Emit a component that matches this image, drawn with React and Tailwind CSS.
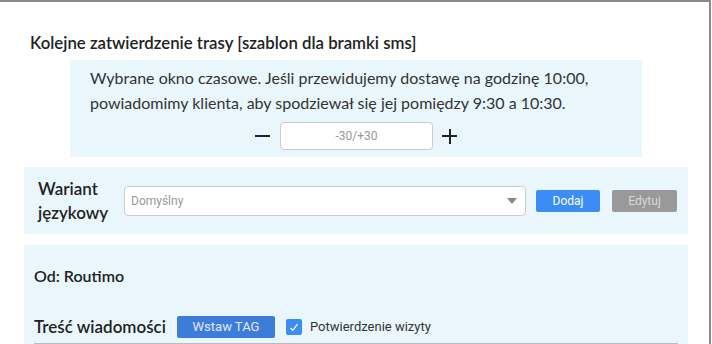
function Caret() {
  return (
    <svg width="10" height="6" viewBox="0 0 10 6" className="text-[#888]">
      <path d="M0 0h10L5 6z" fill="currentColor" />
    </svg>
  );
}

export default function App() {
  return (
    <div className="w-[712px] h-[344px] overflow-hidden bg-white font-['Lato',sans-serif] text-[#222]">
      <div className="h-full w-[711px] border-t-2 border-r-2 border-[#8a8a8a] pt-[30px]">
        <h2 className="pl-[30px] text-[16.8px] font-semibold leading-[22px]">
          Kolejne zatwierdzenie trasy [szablon dla bramki sms]
        </h2>

        <div className="mx-[70px] mt-[6px] w-[572px] bg-[#e9f7fd] px-5 pt-[5px] pb-[7px]">
          <p className="text-[16px] leading-[25px] text-[#333]">
            Wybrane okno czasowe. Jeśli przewidujemy dostawę na godzinę 10:00,
            powiadomimy klienta, aby spodziewał się jej pomiędzy 9:30 a 10:30.
          </p>
          <div className="mt-[7px] flex items-center justify-center gap-[9px]">
            <span className="block w-[15px] h-[2px] bg-[#222]" />
            <input
              placeholder="-30/+30"
              className="ml-[1px] h-[28px] w-[153px] rounded-[4px] border border-[#ccc] bg-white text-center font-['Roboto',sans-serif] text-[12px] placeholder:text-[#999] outline-none"
            />
            <span className="relative block w-[15px] h-[15px]">
              <span className="absolute left-0 top-[6.5px] w-[15px] h-[2px] bg-[#222]" />
              <span className="absolute top-0 left-[6.5px] w-[2px] h-[15px] bg-[#222]" />
            </span>
          </div>
        </div>

        <div className="mx-[24px] mt-[10px] flex h-[67px] w-[664px] items-center bg-[#e9f7fd] pl-[14px]">
          <div className="w-[86px] text-[17px] font-semibold leading-[24px]">
            Wariant językowy
          </div>
          <div className="flex h-[30px] w-[402px] items-center justify-between rounded-[4px] border border-[#ccc] bg-white pl-[6px] pr-[8px]">
            <span className="font-['Roboto',sans-serif] text-[12px] text-[#999]">Domyślny</span>
            <Caret />
          </div>
          <button className="ml-[10px] h-[22px] w-[64px] rounded-[2px] bg-[#3b8df3] font-['Roboto',sans-serif] text-[12px] text-white">
            Dodaj
          </button>
          <button className="ml-[12px] h-[22px] w-[65px] rounded-[2px] bg-[#999] font-['Roboto',sans-serif] text-[12px] text-[#d8d8d8]">
            Edytuj
          </button>
        </div>

        <div className="mx-[24px] mt-[11px] h-[120px] w-[664px] bg-[#e9f7fd] px-[10px] pt-[20px]">
          <div className="text-[16px] font-semibold leading-[22px]">Od: Routimo</div>
          <div className="mt-[28px] flex items-center">
            <span className="text-[17px] font-semibold leading-[24px]">Treść wiadomości</span>
            <button className="ml-[11px] h-[22px] w-[98px] rounded-[2px] bg-[#3b7dd8] font-['Roboto',sans-serif] text-[13px] text-[#e6e6f5]">
              Wstaw TAG
            </button>
            <span className="ml-[11px] flex h-[16px] w-[16px] items-center justify-center rounded-[2px] bg-[#3b8df3]">
              <svg width="10" height="9" viewBox="0 0 10 9">
                <path d="M1.5 5l2.3 2.3L8.5 1.2" stroke="white" strokeWidth="1.3" fill="none" />
              </svg>
            </span>
            <span className="ml-[8px] font-['Roboto',sans-serif] text-[13px] text-[#333]">Potwierdzenie wizyty</span>
          </div>
          <div className="mt-[4px] h-[2px] w-[644px] bg-[#bbb]" />
        </div>
      </div>
    </div>
  );
}
